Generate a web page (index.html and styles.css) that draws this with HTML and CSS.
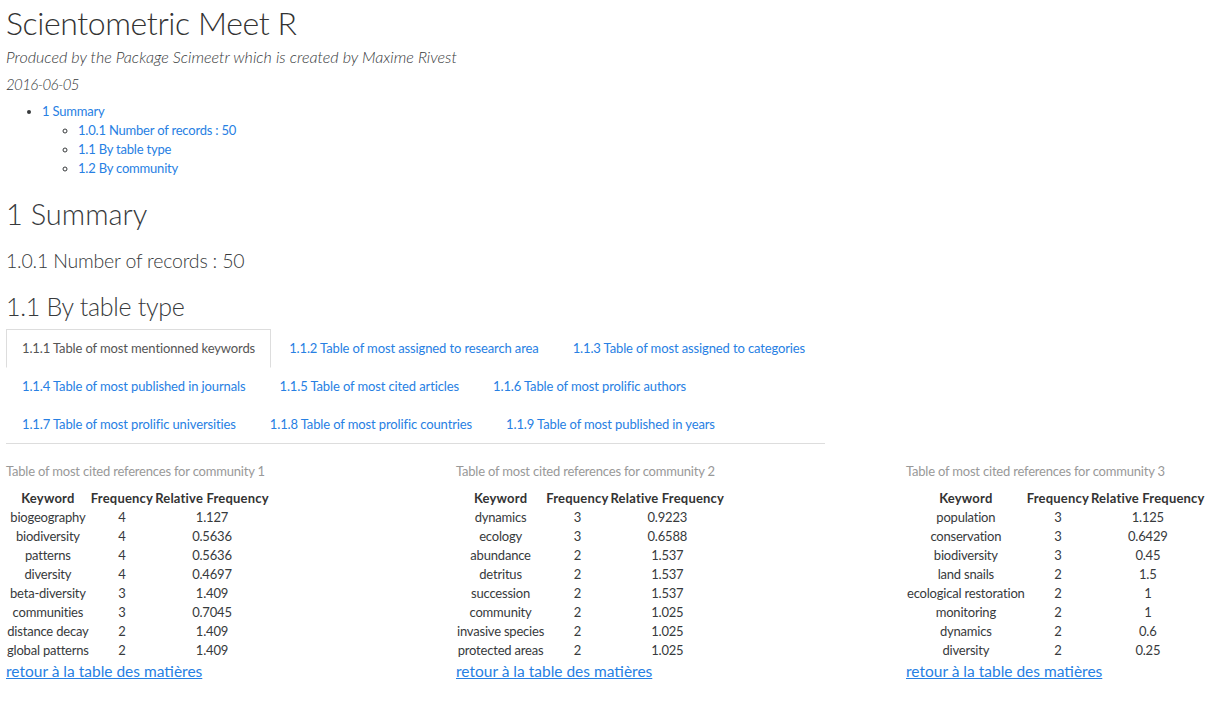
FILE: index.html
```html
<!DOCTYPE html>
<html>
<head>
<meta charset="utf-8">
<title>Scientometric Meet R</title>
<link rel="stylesheet" href="styles.css">
</head>
<body>
<div class="page">
  <h1 class="title">Scientometric Meet R</h1>
  <h4 class="subtitle">Produced by the Package Scimeetr which is created by Maxime Rivest</h4>
  <h4 class="date">2016-06-05</h4>

  <ul class="toc" id="toc">
    <li><a href="#summary">1 Summary</a>
      <ul>
        <li><a href="#records">1.0.1 Number of records : 50</a></li>
        <li><a href="#type">1.1 By table type</a></li>
        <li><a href="#community">1.2 By community</a></li>
      </ul>
    </li>
  </ul>

  <h1 class="h-sec" id="summary">1 Summary</h1>
  <h3 class="h-sub" id="records">1.0.1 Number of records : 50</h3>
  <h2 class="h-type" id="type">1.1 By table type</h2>

  <ul class="tabs">
    <li class="tab active"><a href="#t1">1.1.1 Table of most mentionned keywords</a></li>
    <li class="tab"><a href="#t2">1.1.2 Table of most assigned to research area</a></li>
    <li class="tab"><a href="#t3">1.1.3 Table of most assigned to categories</a></li>
    <li class="tab"><a href="#t4">1.1.4 Table of most published in journals</a></li>
    <li class="tab"><a href="#t5">1.1.5 Table of most cited articles</a></li>
    <li class="tab"><a href="#t6">1.1.6 Table of most prolific authors</a></li>
    <li class="tab"><a href="#t7">1.1.7 Table of most prolific universities</a></li>
    <li class="tab"><a href="#t8">1.1.8 Table of most prolific countries</a></li>
    <li class="tab"><a href="#t9">1.1.9 Table of most published in years</a></li>
  </ul>

  <div class="tab-content">
    <div class="col">
      <div class="cap">Table of most cited references for community 1</div>
      <table class="kw">
        <thead><tr><th>Keyword</th><th>Frequency</th><th>Relative Frequency</th></tr></thead>
        <tbody>
          <tr><td>biogeography</td><td>4</td><td>1.127</td></tr>
          <tr><td>biodiversity</td><td>4</td><td>0.5636</td></tr>
          <tr><td>patterns</td><td>4</td><td>0.5636</td></tr>
          <tr><td>diversity</td><td>4</td><td>0.4697</td></tr>
          <tr><td>beta-diversity</td><td>3</td><td>1.409</td></tr>
          <tr><td>communities</td><td>3</td><td>0.7045</td></tr>
          <tr><td>distance decay</td><td>2</td><td>1.409</td></tr>
          <tr><td>global patterns</td><td>2</td><td>1.409</td></tr>
        </tbody>
      </table>
      <a class="back" href="#toc">retour à la table des matières</a>
    </div>
    <div class="col">
      <div class="cap">Table of most cited references for community 2</div>
      <table class="kw">
        <thead><tr><th>Keyword</th><th>Frequency</th><th>Relative Frequency</th></tr></thead>
        <tbody>
          <tr><td>dynamics</td><td>3</td><td>0.9223</td></tr>
          <tr><td>ecology</td><td>3</td><td>0.6588</td></tr>
          <tr><td>abundance</td><td>2</td><td>1.537</td></tr>
          <tr><td>detritus</td><td>2</td><td>1.537</td></tr>
          <tr><td>succession</td><td>2</td><td>1.537</td></tr>
          <tr><td>community</td><td>2</td><td>1.025</td></tr>
          <tr><td>invasive species</td><td>2</td><td>1.025</td></tr>
          <tr><td>protected areas</td><td>2</td><td>1.025</td></tr>
        </tbody>
      </table>
      <a class="back" href="#toc">retour à la table des matières</a>
    </div>
    <div class="col">
      <div class="cap">Table of most cited references for community 3</div>
      <table class="kw">
        <thead><tr><th>Keyword</th><th>Frequency</th><th>Relative Frequency</th></tr></thead>
        <tbody>
          <tr><td>population</td><td>3</td><td>1.125</td></tr>
          <tr><td>conservation</td><td>3</td><td>0.6429</td></tr>
          <tr><td>biodiversity</td><td>3</td><td>0.45</td></tr>
          <tr><td>land snails</td><td>2</td><td>1.5</td></tr>
          <tr><td>ecological restoration</td><td>2</td><td>1</td></tr>
          <tr><td>monitoring</td><td>2</td><td>1</td></tr>
          <tr><td>dynamics</td><td>2</td><td>0.6</td></tr>
          <tr><td>diversity</td><td>2</td><td>0.25</td></tr>
        </tbody>
      </table>
      <a class="back" href="#toc">retour à la table des matières</a>
    </div>
  </div>
</div>
</body>
</html>
```

FILE: styles.css
```css
html, body {
  margin: 0;
  padding: 0;
  background: #fff;
}

body {
  font-family: Lato, "Open Sans", "Liberation Sans", sans-serif;
  font-size: 13px;
  letter-spacing: -0.2px;
  color: #373a3c;
}

.page {
  padding: 0 6px;
}

a {
  color: #2780e3;
  text-decoration: none;
}

h1, h2, h3, h4 {
  font-weight: 300;
  margin: 0;
}

.title {
  font-size: 32px;
  letter-spacing: -0.4px;
  line-height: 40px;
  margin-top: 3px;
  color: #333;
}

.subtitle, .date {
  font-style: italic;
  line-height: 20px;
}

.subtitle {
  font-size: 16.1px;
  letter-spacing: 0;
  margin-top: 4px;
}

.date {
  font-size: 15px;
  letter-spacing: -0.6px;
  margin-top: 7px;
}

.toc {
  margin: 7.5px 0 0;
  padding-left: 36px;
  list-style: disc;
  line-height: 19px;
}

.toc ul {
  margin: 0;
  padding-left: 36px;
  list-style: circle;
}

.h-sec {
  font-size: 29px;
  letter-spacing: 0;
  line-height: 36px;
  margin-top: 18px;
}

.h-sub {
  font-size: 19.5px;
  letter-spacing: -0.2px;
  line-height: 26px;
  margin-top: 16px;
}

.h-type {
  font-size: 25px;
  letter-spacing: -0.3px;
  line-height: 32px;
  margin-top: 16px;
}

.tabs {
  list-style: none;
  margin: 7px 0 0;
  padding: 0;
  width: 819px;
  display: flex;
  flex-wrap: wrap;
  border-bottom: 1px solid #ddd;
  letter-spacing: -0.12px;
}

.tab {
  margin-bottom: -1px;
}

.tab a {
  display: block;
  padding: 9px 15px;
  line-height: 19px;
  border: 1px solid transparent;
  margin-right: 2px;
}

.tab.active a {
  color: #555;
  background: #fff;
  border-color: #ddd #ddd transparent;
}

.tab-content {
  display: grid;
  grid-template-columns: 450px 450px auto;
  padding-top: 18px;
}

.cap {
  color: #999;
  line-height: 19px;
  white-space: nowrap;
  margin-bottom: 8px;
}

.kw {
  border-collapse: collapse;
  line-height: 19px;
}

.kw th {
  font-weight: 700;
  text-align: center;
  padding: 0 1px;
  letter-spacing: 0.2px;
  color: #333;
}

.kw td {
  text-align: center;
  padding: 0 1px;
}

.back {
  display: inline-block;
  font-size: 15.5px;
  letter-spacing: 0;
  line-height: 22px;
  text-decoration: underline;
}
```
